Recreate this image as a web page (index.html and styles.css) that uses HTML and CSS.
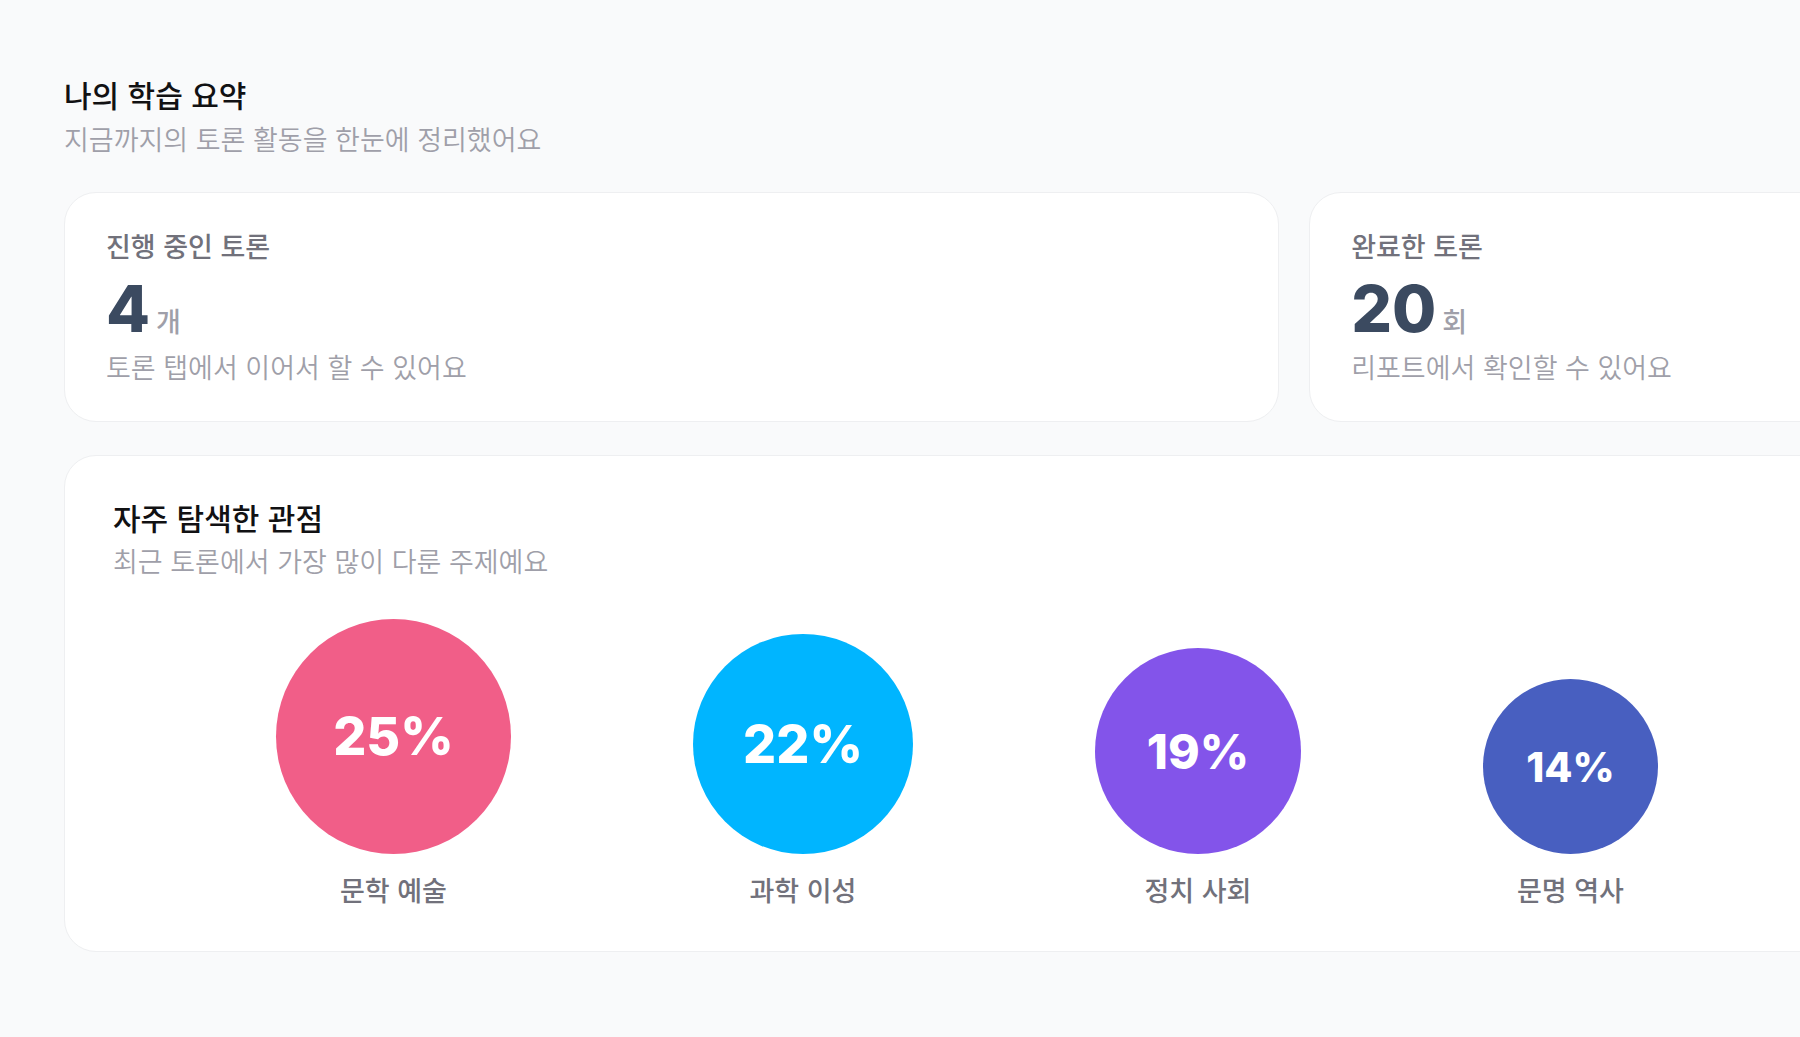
FILE: index.html
```html
<!DOCTYPE html>
<html lang="ko">
<head>
<meta charset="utf-8">
<meta name="viewport" content="width=device-width, initial-scale=1">
<title>나의 학습 요약</title>
<link rel="stylesheet" href="styles.css">
</head>
<body>
<main class="summary">
  <header class="heading">
    <h1 class="title">나의 학습 요약</h1>
    <p class="caption">지금까지의 토론 활동을 한눈에 정리했어요</p>
  </header>

  <div class="board">
    <section class="card stat">
      <h2 class="label">진행 중인 토론</h2>
      <p class="figure"><span class="number">4</span><span class="unit">개</span></p>
      <p class="caption">토론 탭에서 이어서 할 수 있어요</p>
    </section>
    <section class="card stat">
      <h2 class="label">완료한 토론</h2>
      <p class="figure"><span class="number">20</span><span class="unit">회</span></p>
      <p class="caption">리포트에서 확인할 수 있어요</p>
    </section>

    <section class="card panel">
      <div class="heading">
        <h2 class="title">자주 탐색한 관점</h2>
        <p class="caption">최근 토론에서 가장 많이 다룬 주제예요</p>
      </div>
      <ul class="topics">
        <li class="topic"><span class="bubble bubble-art">25%</span><span class="label">문학 예술</span></li>
        <li class="topic"><span class="bubble bubble-science">22%</span><span class="label">과학 이성</span></li>
        <li class="topic"><span class="bubble bubble-politics">19%</span><span class="label">정치 사회</span></li>
        <li class="topic"><span class="bubble bubble-history">14%</span><span class="label">문명 역사</span></li>
      </ul>
    </section>
  </div>
</main>
</body>
</html>
```
FILE: styles.css
```css
* {
  box-sizing: border-box;
  margin: 0;
  padding: 0;
}

body {
  background: #f9fafb;
  color: #111113;
  font-family: "Noto Sans CJK KR", sans-serif;
}

.summary {
  padding: 72px 0 72px 64px;
  overflow: hidden;
}

.heading {
  display: grid;
  gap: 3px;
  margin-bottom: 33px;
}

.title {
  font-size: 30px;
  font-weight: 500;
  line-height: 44px;
}

.caption {
  color: #9f9fa9;
  font-size: 27px;
  font-weight: 350;
  line-height: 40px;
}

.label {
  color: #71717b;
  font-size: 27px;
  font-weight: 500;
  line-height: 40px;
}

/* Two stat cards side by side; the second runs past the window edge. */
.board {
  display: grid;
  grid-template-columns: repeat(2, 70%);
  column-gap: 30px;
  row-gap: 33px;
}

.card {
  background: #fff;
  border: 1px solid #eeeff1;
  border-radius: 32px;
}

.stat {
  padding: 33px 41px 34px;
}

.figure {
  display: flex;
  align-items: baseline;
  gap: 6px;
  height: 81px;
}

.number {
  color: #3b4a60;
  font-family: Inter, sans-serif;
  font-size: 64px;
  font-weight: 800;
  line-height: 86px;
}

.unit {
  color: #9f9fa9;
  font-size: 27px;
  font-weight: 500;
  line-height: 40px;
}

.panel {
  grid-column: 1 / -1;
  padding: 39px 48px 41px;
}

.topics {
  display: flex;
  align-items: flex-end;
  gap: 182px;
  margin-top: 38px;
  padding-left: 163px;
  list-style: none;
}

.panel .heading {
  gap: 2px;
  margin-bottom: 0;
}

.topic {
  display: flex;
  flex-direction: column;
  align-items: center;
  gap: 16px;
}

.bubble {
  display: grid;
  place-items: center;
  aspect-ratio: 1;
  border-radius: 50%;
  color: #fff;
  font-family: Inter, sans-serif;
  font-weight: 800;
}

.bubble-art {
  width: 235px;
  background: #f15e88;
  font-size: 52px;
}

.bubble-science {
  width: 220px;
  background: #00b5ff;
  font-size: 52px;
}

.bubble-politics {
  width: 206px;
  background: #8354ea;
  font-size: 48px;
}

.bubble-history {
  width: 175px;
  background: #485fc0;
  font-size: 41px;
}
```
